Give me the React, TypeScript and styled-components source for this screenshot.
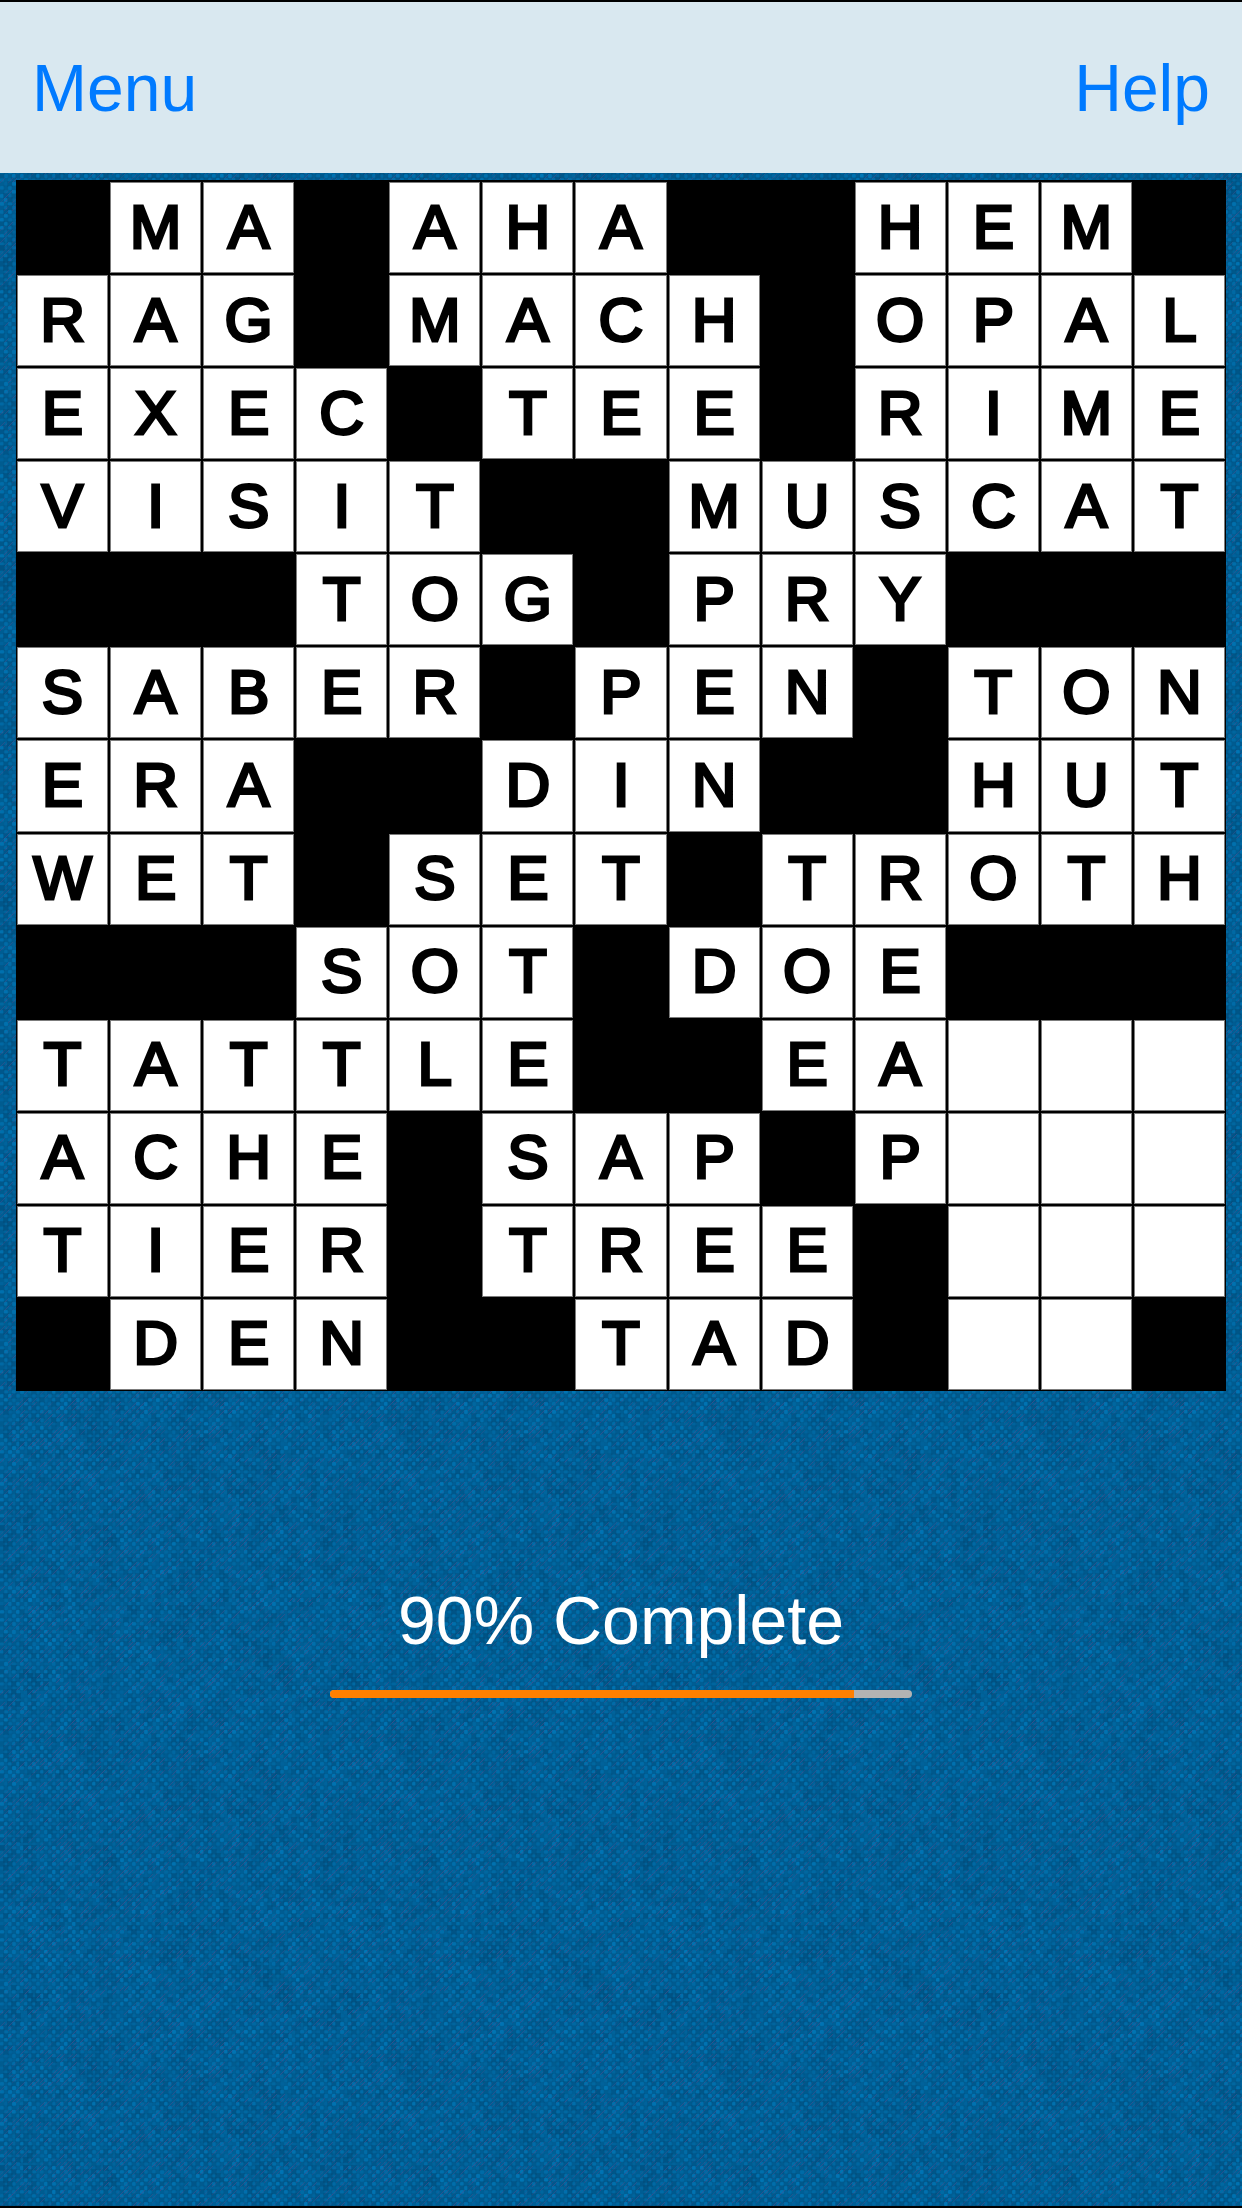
import React from "react";
import styled, { createGlobalStyle } from "styled-components";

const ROWS = [
  "#MA#AHA##HEM#",
  "RAG#MACH#OPAL",
  "EXEC#TEE#RIME",
  "VISIT##MUSCAT",
  "###TOG#PRY###",
  "SABER#PEN#TON",
  "ERA##DIN##HUT",
  "WET#SET#TROTH",
  "###SOT#DOE###",
  "TATTLE##EA   ",
  "ACHE#SAP#P   ",
  "TIER#TREE#   ",
  "#DEN##TAD#  #",
];

const PERCENT = 90;

// Woven cloth: light knots, dark hollows and violet threads in one repeating tile.
function weave(size: number): string {
  let seed = 7;
  const rand = () => {
    seed = (seed * 16807) % 2147483647;
    return seed / 2147483647;
  };
  const turn = (2 * Math.PI) / size;
  const parts: string[] = [];
  for (let y = 0; y < size; y += 4) {
    for (let x = 0; x < size; x += 4) {
      const even = ((x + y) / 4) % 2 === 0;
      const drift =
        0.46 +
        0.07 * Math.sin(turn * (4 * x + 3 * y) + 2 * Math.sin(turn * 3 * y)) +
        0.07 * Math.sin(turn * (5 * x - 2 * y) + 2 * Math.cos(turn * 4 * x));
      const r = rand();
      if (even) {
        const o = (0.08 + r * drift * 1.1).toFixed(2);
        parts.push(`<rect x='${x}' y='${y}' width='4' height='4' rx='1' fill='#0080c4' opacity='${o}'/>`);
      } else {
        const o = (r * (1 - drift) * 0.9).toFixed(2);
        parts.push(`<rect x='${x - 1}' y='${y - 1}' width='6' height='6' fill='#004a78' opacity='${o}'/>`);
      }
      if (rand() < 0.28) {
        const o = (0.25 + rand() * 0.4).toFixed(2);
        parts.push(`<path d='M${x} ${y + 5}l5-5' stroke='#4a4a8c' stroke-width='1' opacity='${o}'/>`);
      }
    }
  }
  const svg = `<svg xmlns='http://www.w3.org/2000/svg' width='${size}' height='${size}'><rect width='${size}' height='${size}' fill='#006097'/>${parts.join("")}</svg>`;
  return `url("data:image/svg+xml,${encodeURIComponent(svg).replace(/'/g, "%27")}")`;
}

const CLOTH = weave(320);

const GlobalStyle = createGlobalStyle`
  *, *::before, *::after { box-sizing: border-box; }
  body {
    margin: 0;
    background: #006097;
    font-family: "Liberation Sans", Arial, Helvetica, sans-serif;
  }
`;

const Screen = styled.div`
  display: flex;
  flex-direction: column;
  min-height: 100vh;
  border-top: 2px solid #000;
  border-bottom: 2px solid #000;
  background: #006097 ${CLOTH};
`;

const NavBar = styled.header`
  display: flex;
  align-items: center;
  justify-content: space-between;
  height: 171px;
  padding: 0 32px;
  background: #d9e8f0;
`;

const NavButton = styled.button`
  padding: 0;
  border: 0;
  background: none;
  color: #007aff;
  font: inherit;
  font-size: 66px;
  line-height: 80px;
  cursor: pointer;
`;

const Main = styled.main`
  display: flex;
  flex-direction: column;
  align-items: center;
  padding: 7px 16px;
`;

const Board = styled.div`
  display: flex;
  flex-direction: column;
  gap: 2px;
  width: 100%;
  padding: 2px 1px 1px;
  background: #000;
`;

const BoardRow = styled.div`
  display: grid;
  grid-template-columns: repeat(13, minmax(0, 1fr));
  gap: 2px;
`;

const Cell = styled.div<{ $blocked: boolean }>`
  display: flex;
  align-items: center;
  justify-content: center;
  aspect-ratio: 1;
  padding-bottom: 2px;
  border: 1px solid ${(p) => (p.$blocked ? "#000" : "#7c7c7c")};
  background: ${(p) => (p.$blocked ? "#000" : "#fff")};
  color: #000;
  font-size: 62px;
  line-height: 1;
  -webkit-text-stroke: 3px #000;
`;

const Status = styled.section`
  display: flex;
  flex-direction: column;
  align-items: center;
  gap: 30px;
  width: 100%;
  padding-top: 189px;
`;

const StatusLabel = styled.label`
  color: #fff;
  font-size: 68px;
  line-height: 80px;
`;

const ProgressBar = styled.progress`
  appearance: none;
  display: block;
  width: 100%;
  max-width: 582px;
  height: 8px;
  border: 0;
  border-radius: 4px;
  overflow: hidden;
  background: #b3b3b3;

  &::-webkit-progress-bar {
    background: #b3b3b3;
  }
  &::-webkit-progress-value {
    background: #ff8000;
  }
`;

export default function App() {
  return (
    <>
      <GlobalStyle />
      <Screen>
        <NavBar>
          <NavButton type="button">Menu</NavButton>
          <NavButton type="button">Help</NavButton>
        </NavBar>
        <Main>
          <Board role="grid" aria-label="Crossword">
            {ROWS.map((row, r) => (
              <BoardRow role="row" key={r}>
                {row.split("").map((ch, c) => (
                  <Cell role="gridcell" key={c} $blocked={ch === "#"}>
                    {ch === "#" || ch === " " ? null : ch}
                  </Cell>
                ))}
              </BoardRow>
            ))}
          </Board>
          <Status>
            <StatusLabel htmlFor="completion">{PERCENT}% Complete</StatusLabel>
            <ProgressBar id="completion" value={PERCENT} max={100} />
          </Status>
        </Main>
      </Screen>
    </>
  );
}
